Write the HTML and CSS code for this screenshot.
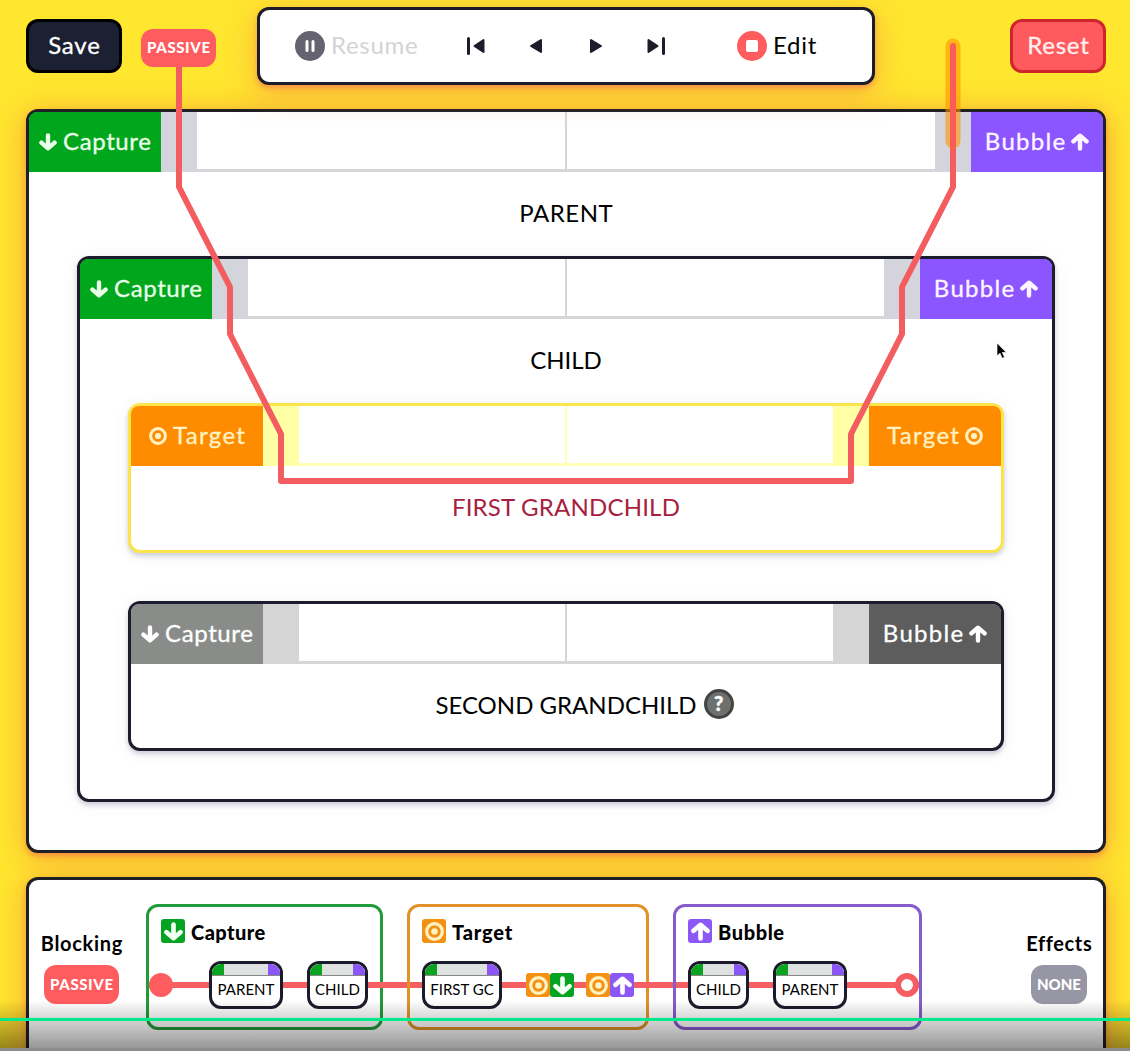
FILE: index.html
```html
<!DOCTYPE html>
<html lang="en">
<head>
<meta charset="utf-8">
<title>Event phases</title>
<link rel="stylesheet" href="styles.css">
</head>
<body>
<svg class="sprite" aria-hidden="true">
  <symbol id="down" viewBox="0 0 18 18"><path d="M9 2.400V15M2.400 9.600 9 15.300l6.600-5.700" class="arrow"/></symbol>
  <symbol id="up" viewBox="0 0 18 18"><path d="M9 15.600V3M2.400 8.400 9 2.700l6.600 5.700" class="arrow"/></symbol>
  <symbol id="aim" viewBox="0 0 18 18"><circle cx="9" cy="9" r="7.400" class="ring"/><circle cx="9" cy="9" r="3.100" fill="currentColor"/></symbol>
</svg>

<header class="top">
  <button class="btn save"><span class="t-save">Save</span></button>
  <span class="pill passive"><span class="t-passive">PASSIVE</span></span>
  <div class="player">
    <span class="resume">
      <svg class="round" viewBox="0 0 30 30"><circle cx="15" cy="15" r="15" fill="#65636f"/><path d="M12 10.500v9M18 10.500v9" stroke="#fff" stroke-width="3" stroke-linecap="round"/></svg>
      <span class="t-resume">Resume</span>
    </span>
    <nav class="steps">
      <svg viewBox="0 0 20 20"><path d="M2.500 2.500v15" class="bar"/><path d="M8.500 10 17.500 4v12z" class="tri"/></svg>
      <svg viewBox="0 0 20 20"><path d="M5 10l10-6v12z" class="tri"/></svg>
      <svg viewBox="0 0 20 20"><path d="M15 10L5 4v12z" class="tri"/></svg>
      <svg viewBox="0 0 20 20"><path d="M17.500 2.500v15" class="bar"/><path d="M11.500 10 2.500 4v12z" class="tri"/></svg>
    </nav>
    <span class="edit">
      <svg class="round" viewBox="0 0 30 30"><circle cx="15" cy="15" r="15" fill="#ff5c60"/><rect x="9" y="9" width="12" height="12" rx="2" fill="#fff"/></svg>
      <span class="t-edit">Edit</span>
    </span>
  </div>
  <button class="btn reset"><span class="t-reset">Reset</span></button>
</header>

<main class="panel node">
  <div class="head">
    <span class="tag capture"><svg><use href="#down"/></svg><span class="t-capture">Capture</span></span>
    <span class="lane"></span><span class="slot"></span><span class="slot"></span><span class="lane"></span>
    <span class="tag bubble"><span class="t-bubble">Bubble</span><svg><use href="#up"/></svg></span>
  </div>
  <div class="name"><span class="t-parent">PARENT</span></div>
  <section class="node child">
    <div class="head">
      <span class="tag capture"><svg><use href="#down"/></svg><span class="t-capture">Capture</span></span>
      <span class="lane"></span><span class="slot"></span><span class="slot"></span><span class="lane"></span>
      <span class="tag bubble"><span class="t-bubble">Bubble</span><svg><use href="#up"/></svg></span>
    </div>
    <div class="name"><span class="t-child">CHILD</span></div>
    <section class="node leaf active">
      <div class="head">
        <span class="tag target"><svg><use href="#aim"/></svg><span class="t-target">Target</span></span>
        <span class="lane"></span><span class="slot"></span><span class="slot"></span><span class="lane"></span>
        <span class="tag target"><span class="t-target">Target</span><svg><use href="#aim"/></svg></span>
      </div>
      <div class="name"><span class="t-first">FIRST GRANDCHILD</span></div>
    </section>
    <section class="node leaf idle">
      <div class="head">
        <span class="tag capture"><svg><use href="#down"/></svg><span class="t-capture">Capture</span></span>
        <span class="lane"></span><span class="slot"></span><span class="slot"></span><span class="lane"></span>
        <span class="tag bubble"><span class="t-bubble">Bubble</span><svg><use href="#up"/></svg></span>
      </div>
      <div class="name"><span class="t-second">SECOND GRANDCHILD</span><span class="help">?</span></div>
    </section>
  </section>
</main>

<footer class="panel summary">
  <div class="side">
    <b class="t-blocking">Blocking</b>
    <span class="pill passive"><span class="t-passive">PASSIVE</span></span>
  </div>
  <div class="phases">
    <section class="phase p-capture">
      <h2><i class="chip green"><svg><use href="#down"/></svg></i><span class="t-h-capture">Capture</span></h2>
      <div class="track">
        <i class="start"></i>
        <span class="stop w-parent"><i class="strip"></i><span class="t-n-parent">PARENT</span></span>
        <span class="stop w-child"><i class="strip"></i><span class="t-n-child">CHILD</span></span>
      </div>
    </section>
    <section class="phase p-target">
      <h2><i class="chip orange"><svg><use href="#aim"/></svg></i><span class="t-h-target">Target</span></h2>
      <div class="track">
        <span class="stop w-first"><i class="strip"></i><span class="t-n-first">FIRST GC</span></span>
        <span class="pair"><i class="chip orange"><svg><use href="#aim"/></svg></i><i class="chip green"><svg><use href="#down"/></svg></i></span>
        <span class="pair second"><i class="chip orange"><svg><use href="#aim"/></svg></i><i class="chip violet"><svg><use href="#up"/></svg></i></span>
      </div>
    </section>
    <section class="phase p-bubble">
      <h2><i class="chip violet"><svg><use href="#up"/></svg></i><span class="t-h-bubble">Bubble</span></h2>
      <div class="track">
        <span class="stop w-child"><i class="strip"></i><span class="t-n-child">CHILD</span></span>
        <span class="stop w-parent"><i class="strip"></i><span class="t-n-parent">PARENT</span></span>
        <i class="end"></i>
      </div>
    </section>
  </div>
  <div class="side effects">
    <b class="t-effects">Effects</b>
    <span class="pill none"><span class="t-none">NONE</span></span>
  </div>
</footer>

<svg class="route" viewBox="0 0 1130 1051">
  <path d="M179 66V187L230 287V334L281 434V481H851V434L902 334V287L953 187V46" fill="none" stroke="#f45d60" stroke-width="6" stroke-linejoin="round"/>
  <path d="M953 46V141" stroke="#ff9500" stroke-opacity=".6" stroke-width="15" stroke-linecap="round"/>
  <path d="M953 46V145" stroke="#fa5d57" stroke-width="6" stroke-linecap="round"/>
</svg>
<svg class="cursor" viewBox="0 0 12 18"><path d="M1 1v13l3-2.700 2.200 5 2.300-1-2.200-4.800h4z" fill="#000" stroke="#fff" stroke-width=".7"/></svg>
<div class="scrub"><i class="progress"></i><i class="base"></i></div>
</body>
</html>
```

FILE: styles.css
```css
* { box-sizing: border-box; }

body {
  margin: 0;
  height: 1051px;
  overflow: hidden;
  position: relative;
  background: #ffe62f;
  color: #000;
  font: 400 24px/1 Lato, "Open Sans", sans-serif;
}

.sprite { position: absolute; width: 0; height: 0; }
.arrow { fill: none; stroke: currentColor; stroke-width: 4.4; stroke-linecap: round; stroke-linejoin: round; }
.ring { fill: none; stroke: currentColor; stroke-width: 3; }
span { white-space: nowrap; }

.top { display: flex; padding: 7px 24px 0 26px; height: 109px; align-items: flex-start; }
.btn {
  width: 96px; height: 54px; margin: 12px 0 0; padding: 0 0 3px;
  border: 3px solid #000; border-radius: 12px;
  background: #1b2032; color: #fff; font: inherit;
}
.reset { background: #ff5b5f; border-color: #ce272b; color: #fff0ef; margin-left: 135px; }
.btn, .tag { -webkit-text-stroke: .3px currentColor; }
.pill {
  display: flex; align-items: center; justify-content: center;
  width: 75px; height: 38px; border-radius: 12px; padding-bottom: 2px;
  background: #ff5c60; color: #fff;
  font-size: 15px; font-weight: 900;
}
.top .pill { margin: 22px 41px 0 19px; }

.player {
  display: flex; align-items: center;
  width: 618px; height: 78px; padding-left: 35px;
  background: #fff; border: 3px solid #1d1c29; border-radius: 12px;
  box-shadow: 0 3px 5px rgba(240, 90, 90, .45), 0 8px 30px rgba(245, 130, 70, .5);
}
.round { width: 30px; height: 30px; flex: none; }
.resume, .edit { display: flex; align-items: center; gap: 6px; }
.t-resume, .t-edit { padding-bottom: 2px; }
.resume { width: 171px; color: #d3d3d3; }
.steps { display: flex; gap: 40px; width: 271px; }
.steps svg { width: 20px; height: 20px; }
.bar { stroke: #1d1c2b; stroke-width: 3; stroke-linecap: round; }
.tri { fill: #1d1c2b; stroke: #1d1c2b; stroke-width: 2; stroke-linejoin: round; }

.panel {
  margin: 0 24px 0 26px; background: #fff;
  border: 3px solid #1f1f26; border-radius: 12px;
  box-shadow: 0 3px 5px rgba(245, 90, 75, .45), 0 4px 30px rgba(245, 130, 60, .65);
}
.node { padding-bottom: 48px; }
.child, .leaf {
  margin: 0 48px; background: #fff;
  border: 3px solid #1d1c2c; border-radius: 12px;
  box-shadow: 0 3px 5px rgba(30, 30, 80, .2), 0 2px 18px rgba(70, 90, 130, .06);
}
.leaf { padding: 0; }
.leaf + .leaf { margin-top: 48px; }
.head { display: flex; height: 60px; border-radius: 8px 8px 0 0; overflow: hidden; }
.tag {
  display: flex; align-items: center; justify-content: center; gap: 6px;
  width: 132px; flex: none; color: #eaffea;
}
.tag > span { padding-bottom: 2px; }
.tag svg { width: 18px; height: 18px; flex: none; }
.capture { background: #00a61c; }
.bubble { background: #8b56ff; color: #fff5ff; }
.target { background: #ff8c00; color: #fff3c4; }
.lane { width: 36px; background: #d4d5dc; }
.slot { flex: 1; border-bottom: 3px solid #d5d6d8; }
.slot + .slot { border-left: 2px solid #d5d6d8; margin-left: -1px; }
.name { display: flex; align-items: center; justify-content: center; height: 84px; padding-bottom: 2px; }
.active { border-color: #fae54b; }
.active .lane { background: #ffffa5; }
.active .slot { border-color: #ffffb5; }
.active .name { color: #a91d3e; }
.idle .capture { background: #8a8c8a; color: #fff; }
.idle .bubble { background: #5c5d5c; color: #fff; }
.idle .lane { background: #d4d5d4; }
.help {
  width: 30px; height: 30px; margin: -3px -37px 0 7px;
  border: 3px solid #414441; border-radius: 50%; background: #6d706d;
  color: #fff; font-size: 20px; font-weight: 900; line-height: 23px; text-align: center;
  -webkit-text-stroke: .5px #fff;
}

/* tracking, with the trailing space taken back so labels stay centred */
.t-save { letter-spacing: .8px; margin-right: -.8px; }
.t-reset { letter-spacing: .8px; margin-right: -.8px; }
.t-resume, .t-edit { letter-spacing: .7px; }
.t-capture { letter-spacing: .6px; margin-right: -.6px; }
.t-bubble { letter-spacing: 1.3px; margin-right: -1.3px; }
.t-target { letter-spacing: 1.3px; margin-right: -1.3px; }
.t-parent { letter-spacing: .5px; margin-right: -.5px; }
.t-first { letter-spacing: .2px; }
.t-passive { letter-spacing: .6px; margin-right: -.6px; }
.t-h-capture { letter-spacing: .45px; }
.t-h-target { letter-spacing: .8px; }
.t-h-bubble { letter-spacing: .6px; }
.t-blocking { letter-spacing: .7px; margin-right: -.7px; }
.t-effects { letter-spacing: .6px; margin-right: -.6px; }

.summary { display: flex; height: 190px; margin-top: 24px; padding: 24px 12px 0; border-bottom: 0; border-radius: 12px 12px 0 0; }
.side { display: flex; flex-direction: column; align-items: center; width: 81px; padding-top: 29px; font-size: 20px; line-height: 20px; }
.side .pill { margin-top: 12px; height: 39px; }
.side .none { width: 56px; background: #9696a5; }
.effects { width: 64px; margin-left: auto; }
.phases { display: flex; gap: 24px; margin-left: 24px; }
.phase { height: 126px; padding: 12px; border: 3px solid; border-radius: 12px; }
.p-capture { width: 237px; border-color: #219b39; }
.p-target { width: 242px; border-color: #e19128; }
.p-bubble { width: 249px; border-color: #865bcc; }
h2 { display: flex; align-items: center; gap: 6px; margin: 0; height: 24px; font-size: 20px; font-weight: 900; }
h2 > span { padding-top: 1px; }
.chip { display: flex; align-items: center; justify-content: center; width: 24px; height: 24px; border-radius: 3px; color: #f2fff2; }
.chip svg { width: 19px; height: 19px; }
.green { background: #04a422; }
.orange { background: #f49113; color: #fff3c4; }
.violet { background: #8b58f5; color: #fff; }
.track {
  display: flex; align-items: center; height: 48px; margin: 18px -12px 0; padding-left: 12px;
  background: linear-gradient(#f45f62, #f45f62) 0 21px / 100% 6px no-repeat;
}
.p-capture .track { padding-left: 0; margin-right: -42px; }
.p-target .track { margin-right: -42px; }
.start, .end { width: 24px; height: 24px; border-radius: 50%; background: #ff5c60; }
.start { margin-right: 36px; }
.end { margin-left: 48px; background: #fff; border: 6px solid #f65d61; }
.stop {
  display: flex; flex-direction: column; align-items: center;
  height: 48px; border: 3px solid #1b1b2b; border-radius: 12px; background: #fff;
  overflow: hidden; font-size: 15px; line-height: 27px; position: relative; z-index: 1;
}
.stop + .stop { margin-left: 24px; }
.strip { width: 100%; height: 11px; margin-bottom: 1px; flex: none; background: #dfe0e0; border: solid #09a41f; border-width: 0 12px; border-right-color: #8b56f5; box-shadow: 0 1px #888; }
.w-parent { width: 74px; }
.w-child { width: 61px; }
.w-first { width: 80px; }
.pair { display: flex; margin-left: 24px; }
.second { margin-left: 12px; }

.route { position: absolute; left: 0; top: 0; width: 1130px; height: 1051px; }
.cursor { position: absolute; left: 996px; top: 342px; width: 12px; height: 18px; }
.scrub {
  position: absolute; left: 0; right: 0; bottom: 0; height: 51px; z-index: 2;
  display: flex; flex-direction: column;
  background: linear-gradient(rgba(0,0,0,0), rgba(0,0,0,.17) 38%, rgba(0,0,0,.43));
}
.progress { height: 3px; margin-top: 18px; background: #00ea8b; }
.base { height: 3px; margin-top: auto; background: #8c8c8c; }
```
